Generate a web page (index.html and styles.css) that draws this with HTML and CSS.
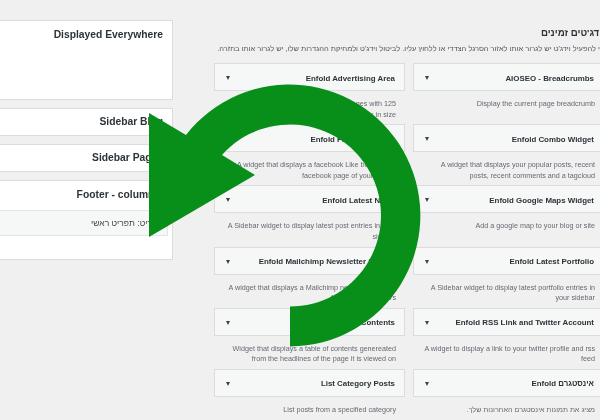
FILE: index.html
```html
<!DOCTYPE html>
<html lang="he">
<head>
    <title>Widgets</title>
    <meta charset="utf-8">
    <link rel="stylesheet" href="styles.css">
</head>
<body>
    <div class="screen">
        <div class="sidebars">
            <div class="sidebar-box tall"><h3>Displayed Everywhere</h3></div>
            <div class="sidebar-box"><h3>Sidebar Blog</h3></div>
            <div class="sidebar-box"><h3>Sidebar Pages</h3></div>
            <div class="sidebar-box tall">
                <h3>Footer - column 1</h3>
                <div class="sidebar-note" dir="rtl">תפריט: תפריט ראשי</div>
            </div>
        </div>
        <div class="available">
            <h2 dir="rtl">ווידג'טים זמינים</h2>
            <p class="intro" dir="rtl">כדי להפעיל וידג'ט יש לגרור אותו לאזור הסרגל הצדדי או ללחוץ עליו. לביטול וידג'ט ולמחיקת ההגדרות שלו, יש לגרור אותו בחזרה.</p>
            <div class="widget-grid">
                <div class="widget">
                    <div class="widget-title"><span class="arrow"></span><span>Enfold Advertising Area</span></div>
                    <p>An advertising widget that displays 2 images with 125 x 125 px in size</p>
                </div>
                <div class="widget">
                    <div class="widget-title"><span class="arrow"></span><span>AIOSEO - Breadcrumbs</span></div>
                    <p>Display the current page breadcrumb</p>
                </div>
                <div class="widget">
                    <div class="widget-title"><span class="arrow"></span><span>Enfold Facebook Page</span></div>
                    <p>A widget that displays a facebook Like box to your facebook page of your choice</p>
                </div>
                <div class="widget">
                    <div class="widget-title"><span class="arrow"></span><span>Enfold Combo Widget</span></div>
                    <p>A widget that displays your popular posts, recent posts, recent comments and a tagcloud</p>
                </div>
                <div class="widget">
                    <div class="widget-title"><span class="arrow"></span><span>Enfold Latest News</span></div>
                    <p>A Sidebar widget to display latest post entries in your sidebar</p>
                </div>
                <div class="widget">
                    <div class="widget-title"><span class="arrow"></span><span>Enfold Google Maps Widget</span></div>
                    <p>Add a google map to your blog or site</p>
                </div>
                <div class="widget">
                    <div class="widget-title"><span class="arrow"></span><span>Enfold Mailchimp Newsletter Signup</span></div>
                    <p>A widget that displays a Mailchimp newsletter signup form for your visitors</p>
                </div>
                <div class="widget">
                    <div class="widget-title"><span class="arrow"></span><span>Enfold Latest Portfolio</span></div>
                    <p>A Sidebar widget to display latest portfolio entries in your sidebar</p>
                </div>
                <div class="widget">
                    <div class="widget-title"><span class="arrow"></span><span>Enfold Table of Contents</span></div>
                    <p>Widget that displays a table of contents genereated from the headlines of the page it is viewed on</p>
                </div>
                <div class="widget">
                    <div class="widget-title"><span class="arrow"></span><span>Enfold RSS Link and Twitter Account</span></div>
                    <p>A widget to display a link to your twitter profile and rss feed</p>
                </div>
                <div class="widget">
                    <div class="widget-title"><span class="arrow"></span><span>List Category Posts</span></div>
                    <p>List posts from a specified category</p>
                </div>
                <div class="widget">
                    <div class="widget-title"><span class="arrow"></span><span>Enfold אינסטגרם</span></div>
                    <p dir="rtl">מציג את תמונות אינסטגרם האחרונות שלך.</p>
                </div>
            </div>
        </div>
        <svg class="undo-arrow" width="600" height="420" viewBox="0 0 600 420">
            <path d="M290 346.5 A131 131 0 1 0 186 135 L149 113 V237 L255 175 L222 155 A91 91 0 1 1 290 306.5 Z" fill="#078f1a"/>
        </svg>
    </div>
</body>
</html>
```

FILE: styles.css
```css
html, body {
    margin: 0;
    height: 100%;
}
body {
    font-family: "Liberation Sans", Arial, sans-serif;
    background-color: #f0f0f1;
    color: #2c3338;
}
.screen {
    position: relative;
    width: 600px;
    height: 420px;
    overflow: hidden;
    display: flex;
}
.sidebars {
    flex: none;
    width: 200px;
    margin-left: -27px;
    padding-top: 20px;
    display: flex;
    flex-direction: column;
    gap: 8px;
    filter: blur(0.5px);
}
.sidebar-box {
    height: 28px;
    box-sizing: border-box;
    background: #fff;
    border: 1px solid #dcdcde;
}
.sidebar-box.tall {
    height: 80px;
}
.sidebar-box h3 {
    margin: 0;
    padding: 6px 9px 0 0;
    font-size: 10.3px;
    line-height: 13px;
    text-align: right;
}
.sidebar-box.tall h3 {
    padding-top: 7px;
}
.sidebar-note {
    margin: 9px 4px 0 0;
    height: 26px;
    padding-right: 4px;
    background: #f6f7f7;
    border: 1px solid #e4e4e6;
    box-sizing: border-box;
    font-size: 8.5px;
    line-height: 24px;
    color: #3c434a;
}
.available {
    flex: none;
    width: 394px;
    margin-left: 41px;
    filter: blur(0.5px);
}
.available h2 {
    margin: 0;
    padding-top: 26px;
    font-size: 9.7px;
    line-height: 13px;
}
.intro {
    margin: 0;
    padding-top: 5px;
    font-size: 7.45px;
    line-height: 10px;
    color: #50575e;
    white-space: nowrap;
}
.widget-grid {
    margin-top: 9px;
    display: grid;
    grid-template-columns: 191px 191px;
    grid-auto-rows: 61.2px;
    column-gap: 8px;
}
.widget-title {
    height: 28px;
    box-sizing: border-box;
    display: flex;
    justify-content: space-between;
    align-items: center;
    padding: 2px 9px 0 11px;
    background: #f6f7f7;
    border: 1px solid #dcdcde;
    font-size: 7.9px;
    font-weight: 700;
}
.arrow {
    width: 0;
    height: 0;
    border-left: 2.5px solid transparent;
    border-right: 2.5px solid transparent;
    border-top: 4px solid #3c434a;
}
.widget p {
    margin: 0;
    padding: 8px 9px 0 9px;
    font-size: 7.2px;
    line-height: 10.5px;
    color: #646970;
    text-align: right;
}
.undo-arrow {
    position: absolute;
    top: 0;
    left: 0;
    filter: blur(0.3px);
}
```
